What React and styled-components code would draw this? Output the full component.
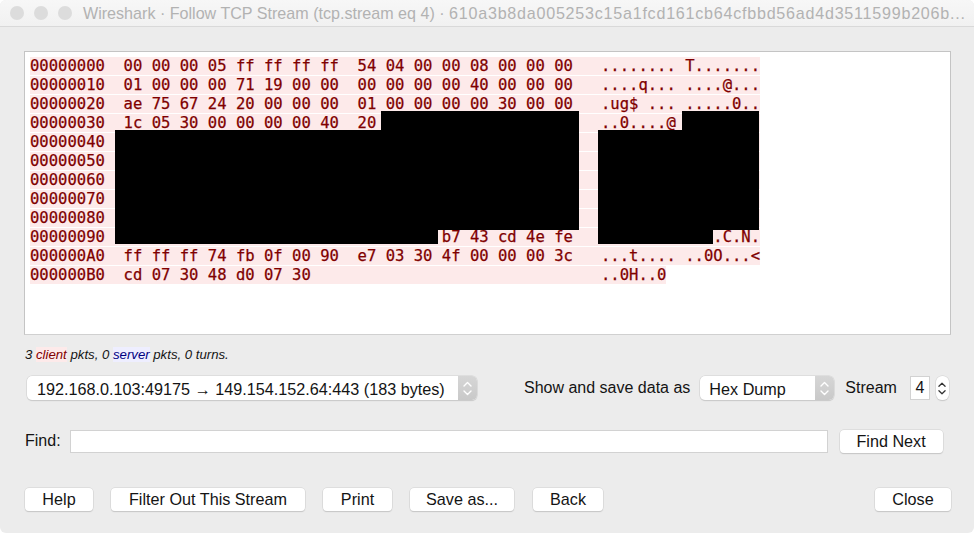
import React from "react";
import styled, { createGlobalStyle } from "styled-components";

const Global = createGlobalStyle`
  html, body { margin: 0; padding: 0; background: #fff; }
  body { font-family: "Liberation Sans", Arial, sans-serif; }
`;

const Win = styled.div`
  width: 974px;
  height: 533px;
  background: #ececec;
  border-radius: 6px;
  overflow: hidden;
  display: flex;
  flex-direction: column;
  color: #141414;
`;
const TitleBar = styled.div`
  height: 26px;
  flex: none;
  display: flex;
  align-items: center;
  padding-left: 10px;
  background: linear-gradient(#f7f7f7, #f1f1f1);
  border-bottom: 1px solid #d9d9d9;
`;
const Light = styled.span`
  width: 14px;
  height: 14px;
  border-radius: 50%;
  background: #dcdcdc;
  margin-right: 10px;
  flex: none;
`;
const TitleText = styled.span`
  margin-left: 1px;
  font-size: 16.1px;
  color: #b2b2b2;
  white-space: nowrap;
`;
const TitleHash = styled.span`
  letter-spacing: 0.76px;
`;
const Content = styled.div`
  flex: 1;
  display: flex;
  flex-direction: column;
  padding: 24px 23px 0 24px;
`;
const Panel = styled.div`
  position: relative;
  box-sizing: border-box;
  height: 284px;
  background: #fff;
  border: 1px solid #c4c4c4;
  border-bottom-color: #d0d0d0;
  padding: 5px 0 0 5px;
`;
const Row = styled.div`
  height: 19px;
  font-family: "DejaVu Sans Mono", "Liberation Mono", monospace;
  font-size: 15.55px;
  line-height: 18px;
  white-space: pre;
`;
const RowText = styled.span`
  display: inline-block;
  height: 18px;
  background: #fdeaea;
  color: #7f0000;
  -webkit-text-stroke: 0.25px #7f0000;
`;
const Redaction = styled.div`
  position: absolute;
  background: #000;
  left: ${(p) => p.$x - 25}px;
  top: ${(p) => p.$y - 52}px;
  width: ${(p) => p.$w}px;
  height: ${(p) => p.$h}px;
`;
const Status = styled.div`
  height: 38px;
  margin-bottom: 3px;
  display: flex;
  align-items: center;
  font-size: 13.2px;
  font-style: italic;
  white-space: pre;
  padding-left: 1px;
`;
const Client = styled.span`
  color: #7f0000;
  background: #fdeaea;
`;
const Server = styled.span`
  color: #00007f;
  background: #eeeeff;
`;
const StreamRow = styled.div`
  height: 24px;
  display: flex;
  align-items: center;
  padding-left: 3px;
`;
const Combo = styled.div`
  box-sizing: border-box;
  width: ${(p) => p.$w}px;
  height: 24px;
  background: #fff;
  border-radius: 5px;
  box-shadow: 0 0 0 0.5px #cfcfcf, 0 1px 1px #c4c4c4;
  display: flex;
  align-items: center;
  overflow: hidden;
  font-size: 16.2px;
`;
const ComboText = styled.span`
  flex: 1;
  padding-left: ${(p) => p.$pad}px;
  padding-top: 2px;
  white-space: nowrap;
`;
const ComboArrow = styled.span`
  width: 19px;
  height: 24px;
  flex: none;
  background: linear-gradient(#d6d6d6, #c9c9c9);
  display: flex;
  align-items: center;
  justify-content: center;
`;
const Label = styled.span`
  font-size: 16px;
  white-space: nowrap;
  margin-left: ${(p) => p.$ml || 0}px;
  margin-right: ${(p) => p.$mr || 0}px;
`;
const SpinValue = styled.div`
  box-sizing: border-box;
  width: 20px;
  height: 24px;
  background: #fff;
  border: 1px solid #d2d2d2;
  font-size: 16px;
  line-height: 21px;
  text-align: center;
`;
const Stepper = styled.div`
  width: 13px;
  height: 24px;
  margin-left: 6px;
  background: #fff;
  border-radius: 6px;
  box-shadow: 0 0 0 0.5px #cfcfcf, 0 1px 1px #c4c4c4;
  display: flex;
  align-items: center;
  justify-content: center;
`;
const FindRow = styled.div`
  height: 24px;
  margin-top: 29px;
  display: flex;
  align-items: center;
  padding-left: 1px;
`;
const FindInput = styled.div`
  box-sizing: border-box;
  width: 758px;
  height: 23px;
  margin-left: 9px;
  background: #fff;
  border: 1px solid #d2d2d2;
`;
const Btn = styled.button`
  box-sizing: border-box;
  width: ${(p) => p.$w}px;
  height: 23px;
  margin-left: ${(p) => p.$ml || 0}px;
  padding: 0;
  border: none;
  border-radius: 4px;
  background: #fff;
  box-shadow: 0 0 0 0.5px #cfcfcf, 0 1px 1px #bfbfbf;
  font-family: "Liberation Sans", Arial, sans-serif;
  font-size: 16.2px;
  line-height: 23px;
  color: #141414;
  white-space: nowrap;
`;
const ButtonRow = styled.div`
  margin-top: 35px;
  height: 24px;
  display: flex;
  align-items: flex-start;
  padding-left: 1px;
`;
const Spacer = styled.div`
  flex: 1;
`;

const COLS = 78;
const line = (s) => s.padEnd(COLS, " ");
const rows = [
  "00000000  00 00 00 05 ff ff ff ff  54 04 00 00 08 00 00 00   ........ T.......",
  "00000010  01 00 00 00 71 19 00 00  00 00 00 00 40 00 00 00   ....q... ....@...",
  "00000020  ae 75 67 24 20 00 00 00  01 00 00 00 00 30 00 00   .ug$ ... .....0..",
  line("00000030  1c 05 30 00 00 00 00 40  20                        ..0....@"),
  line("00000040"),
  line("00000050"),
  line("00000060"),
  line("00000070"),
  line("00000080"),
  "00000090" + " ".repeat(36) + "b7 43 cd 4e fe" + " ".repeat(15) + ".C.N.",
  "000000A0  ff ff ff 74 fb 0f 00 90  e7 03 30 4f 00 00 00 3c   ...t.... ..0O...<",
  "000000B0  cd 07 30 48 d0 07 30" + " ".repeat(31) + "..0H..0",
];

const redactions = [
  { x: 115, y: 130, w: 266, h: 114 },
  { x: 381, y: 111, w: 198, h: 119 },
  { x: 381, y: 230, w: 57, h: 14 },
  { x: 598, y: 130, w: 115, h: 114 },
  { x: 682, y: 111, w: 77, h: 119 },
  { x: 682, y: 230, w: 31, h: 14 },
];

const Updown = ({ stroke, w = 9, h = 17 }) => (
  <svg width={w} height={h} viewBox="0 0 9 17" fill="none" stroke={stroke} strokeWidth="1.4" strokeLinecap="round" strokeLinejoin="round">
    <path d="M1 6 L4.5 2.5 L8 6" />
    <path d="M1 11 L4.5 14.5 L8 11" />
  </svg>
);

export default function App() {
  return (
    <Win>
      <Global />
      <TitleBar>
        <Light />
        <Light />
        <Light />
        <TitleText>
          Wireshark · Follow TCP Stream (tcp.stream eq 4) · <TitleHash>610a3b8da005253c15a1fcd161cb64cfbbd56ad4d3511599b206b...</TitleHash>
        </TitleText>
      </TitleBar>
      <Content>
        <Panel>
          {rows.map((r) => (
            <Row key={r.slice(0, 8)}>
              <RowText>{r}</RowText>
            </Row>
          ))}
          {redactions.map((b) => (
            <Redaction key={`${b.x}-${b.y}`} $x={b.x} $y={b.y} $w={b.w} $h={b.h} />
          ))}
        </Panel>
        <Status>
          <span>
            3 <Client>client</Client> pkts, 0 <Server>server</Server> pkts, 0 turns.
          </span>
        </Status>
        <StreamRow>
          <Combo $w={450}>
            <ComboText $pad={10}>192.168.0.103:49175 → 149.154.152.64:443 (183 bytes)</ComboText>
            <ComboArrow><Updown stroke="#fff" /></ComboArrow>
          </Combo>
          <Label $ml={47} $mr={10}>Show and save data as</Label>
          <Combo $w={134}>
            <ComboText $pad={9}>Hex Dump</ComboText>
            <ComboArrow><Updown stroke="#fff" /></ComboArrow>
          </Combo>
          <Label $ml={11} $mr={13}>Stream</Label>
          <SpinValue>4</SpinValue>
          <Stepper><Updown stroke="#333" w={8} h={15} /></Stepper>
        </StreamRow>
        <FindRow>
          <Label>Find:</Label>
          <FindInput />
          <Btn $w={103} $ml={12}>Find Next</Btn>
        </FindRow>
        <ButtonRow>
          <Btn $w={68}>Help</Btn>
          <Btn $w={194} $ml={18}>Filter Out This Stream</Btn>
          <Btn $w={69} $ml={18}>Print</Btn>
          <Btn $w={104} $ml={18}>Save as...</Btn>
          <Btn $w={70} $ml={19}>Back</Btn>
          <Spacer />
          <Btn $w={76}>Close</Btn>
        </ButtonRow>
      </Content>
    </Win>
  );
}
